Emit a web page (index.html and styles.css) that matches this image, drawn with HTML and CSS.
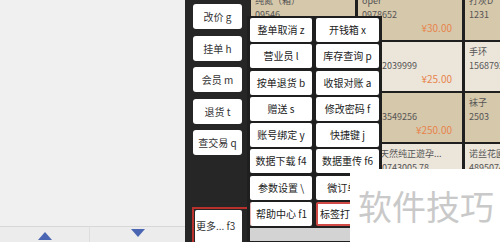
FILE: index.html
```html
<!DOCTYPE html>
<html lang="zh">
<head>
    <meta charset="UTF-8">
    <title>收银 - 更多</title>
    <link rel="stylesheet" href="styles.css">
</head>
<body>
    <div class="screen">
        <!-- 左侧商品列表区 -->
        <div class="left">
            <div class="left-main"></div>
            <div class="pager">
                <div class="pager-half up">
                    <svg width="14" height="8" viewBox="0 0 14 8"><polygon points="7,0 14,8 0,8" fill="#4a66b2"/></svg>
                </div>
                <div class="pager-half down">
                    <svg width="14" height="8" viewBox="0 0 14 8"><polygon points="0,0 14,0 7,8" fill="#4a66b2"/></svg>
                </div>
            </div>
        </div>

        <!-- 功能键 -->
        <div class="side">
            <div class="side-btns">
                <div class="side-btn">改价 g</div>
                <div class="side-btn">挂单 h</div>
                <div class="side-btn">会员 m</div>
                <div class="side-btn">退货 t</div>
                <div class="side-btn">查交易 q</div>
            </div>
            <div class="more-wrap">
                <div class="side-btn more">更多... f3</div>
            </div>
        </div>

        <!-- 商品卡片 -->
        <div class="cards">
            <div class="card dark"><div class="c-name">纯氮（箱）</div><div class="c-code">09546</div><div class="c-price">¥12.00</div></div>
            <div class="card dark"><div class="c-name">oper</div><div class="c-code">0978652</div><div class="c-price">¥30.00</div></div>
            <div class="card dark"><div class="c-name">打灰D</div><div class="c-code">1231</div><div class="c-price">¥8.00</div></div>

            <div class="card light"><div class="c-name">饮料</div><div class="c-code">6901</div><div class="c-price">¥3.00</div></div>
            <div class="card light"><div class="c-name"></div><div class="c-code">69202039999</div><div class="c-price">¥25.00</div></div>
            <div class="card light"><div class="c-name">手环</div><div class="c-code">1568792</div><div class="c-price">¥15.00</div></div>

            <div class="card dark"><div class="c-name">零食</div><div class="c-code">6902</div><div class="c-price">¥6.00</div></div>
            <div class="card dark"><div class="c-name"></div><div class="c-code">69213549256</div><div class="c-price">¥250.00</div></div>
            <div class="card dark"><div class="c-name">袜子</div><div class="c-code">2503</div><div class="c-price">¥10.00</div></div>

            <div class="card light"><div class="c-name">纸巾</div><div class="c-code">6903</div><div class="c-price">¥5.00</div></div>
            <div class="card light"><div class="c-name">进口天然纯正遊孕...</div><div class="c-code">69210743005 78</div><div class="c-price">¥68.00</div></div>
            <div class="card light"><div class="c-name">诺丝花園</div><div class="c-code">4895074</div><div class="c-price">¥20.00</div></div>
        </div>

        <!-- 更多菜单 -->
        <div class="popup">
            <div class="menu">
                <div class="m-btn">整单取消 z</div>
                <div class="m-btn">开钱箱 x</div>
                <div class="m-btn">营业员 l</div>
                <div class="m-btn">库存查询 p</div>
                <div class="m-btn">按单退货 b</div>
                <div class="m-btn">收银对账 a</div>
                <div class="m-btn">赠送 s</div>
                <div class="m-btn">修改密码 f</div>
                <div class="m-btn">账号绑定 y</div>
                <div class="m-btn">快捷键 j</div>
                <div class="m-btn">数据下载 f4</div>
                <div class="m-btn">数据重传 f6</div>
                <div class="m-btn">参数设置 \</div>
                <div class="m-btn">微订单 w</div>
                <div class="m-btn help">帮助中心 f1</div>
                <div class="m-btn label">标签打印 f2</div>
            </div>
            <div class="menu-bar"></div>
        </div>

        <div class="watermark">软件技巧</div>
    </div>
</body>
</html>
```

FILE: styles.css
```css
* {
    box-sizing: border-box;
}

body {
    margin: 0;
    font-family: "Noto Sans CJK SC", "DejaVu Sans", sans-serif;
    background: #f0f0f0;
    overflow: hidden;
}

.screen {
    position: relative;
    display: flex;
    width: 500px;
    height: 242px;
    overflow: hidden;
}

/* left list area */
.left {
    width: 185px;
    display: flex;
    flex-direction: column;
}
.left-main {
    flex: 1;
    background: #f0f0f0;
}
.pager {
    height: 16px;
    display: flex;
    background: #ececec;
    border-top: 1px solid #d8d8d8;
}
.pager-half {
    display: flex;
    justify-content: center;
}
.pager-half svg { display: block; }
.pager-half.up {
    width: 90px;
    padding-top: 5px;
    border-right: 1px solid #dedede;
}
.pager-half.down {
    flex: 1;
    padding-top: 2px;
}

/* function keys */
.side {
    width: 66px;
    background: #262626;
    display: flex;
    flex-direction: column;
    padding-top: 4px;
}
.side-btns {
    padding-left: 8px;
}
.side-btn {
    width: 49px;
    height: 25px;
    margin-bottom: 6.5px;
    background: #fff;
    border-radius: 3px;
    color: #333;
    font-size: 10px;
    line-height: 25px;
    text-align: center;
    white-space: nowrap;
}
.more-wrap {
    margin-top: auto;
    margin-left: 7px;
    width: 58px;
    height: 35px;
    border: 2px solid #b9312c;
    border-bottom: none;
    padding: 1px 0 0 1px;
}
.side-btn.more {
    width: 47px;
    height: 33px;
    margin: 0;
    line-height: 31px;
    text-align: left;
    padding-left: 1px;
    border-radius: 2px;
}

/* product cards */
.cards {
    flex: 1;
    background: #1f1f1f;
    display: grid;
    grid-template-columns: 104px 104px 104px;
    grid-auto-rows: 49px;
    column-gap: 3px;
    row-gap: 2px;
    margin-top: -9px;
    align-content: start;
    overflow: hidden;
}
.card {
    position: relative;
    padding: 4px 4px 0 4px;
    color: #555;
    font-size: 9px;
    line-height: 12px;
    white-space: nowrap;
    overflow: hidden;
}
.card.dark { background: #d6c8ab; }
.card.light { background: #ece5da; }
.c-name {
    height: 14px;
}
.c-code {
    height: 13px;
}
.c-price {
    text-align: right;
    padding-right: 6px;
    color: #e7844c;
    font-size: 10px;
    line-height: 12px;
}

/* more menu overlay */
.popup {
    position: absolute;
    left: 247px;
    top: 16px;
    width: 135px;
    height: 226px;
    background: #1f1f1f;
    padding: 2px 3px 0 3px;
}
.menu {
    display: grid;
    grid-template-columns: 62px 63px;
    grid-auto-rows: 24px;
    column-gap: 4px;
    row-gap: 2.3px;
}
.m-btn {
    background: #fff;
    border-radius: 2px;
    color: #222;
    font-size: 10px;
    line-height: 24px;
    text-align: center;
    white-space: nowrap;
    overflow: hidden;
}
.m-btn.help {
    border-left: 1px solid #e2b3b3;
}
.m-btn.label {
    border: 2px solid #d24a45;
    line-height: 20px;
    text-align: left;
    padding-left: 2px;
}
.menu-bar {
    margin-top: 2px;
    height: 13px;
    background: #d3d3d3;
}

/* watermark */
.watermark {
    position: absolute;
    left: 350px;
    top: 169px;
    width: 150px;
    height: 73px;
    background: #fff;
    color: #c9c9c9;
    font-size: 34px;
    line-height: 73px;
    padding-left: 8px;
    white-space: nowrap;
}
```
